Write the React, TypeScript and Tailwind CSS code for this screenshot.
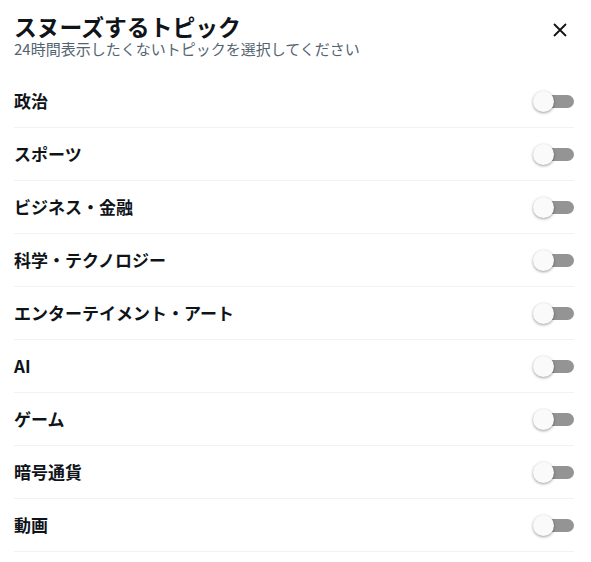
import React from "react";

const topics = [
  "政治",
  "スポーツ",
  "ビジネス・金融",
  "科学・テクノロジー",
  "エンターテイメント・アート",
  "AI",
  "ゲーム",
  "暗号通貨",
  "動画",
];

function Toggle() {
  return (
    <div className="relative w-[41px] h-[21px] flex items-center justify-end">
      <div className="w-[35px] h-[13px] rounded-full bg-[#949494]" />
      <div className="absolute left-0 top-0 w-[21px] h-[21px] rounded-full bg-[#fafafa] shadow-[0_1px_3px_rgba(0,0,0,0.4)]" />
    </div>
  );
}

export default function App() {
  return (
    <div
      className="w-[591px] h-[562px] bg-white pl-[14px] pr-[17px] overflow-hidden"
      style={{ fontFamily: '"Noto Sans CJK JP", "Noto Sans", sans-serif' }}
    >
      <div className="flex justify-between items-start pt-[14px]">
        <div className="flex flex-col">
          <div className="text-[22.8px] leading-[26px] font-bold text-[#0f1419]">
            スヌーズするトピック
          </div>
          <div className="text-[15px] leading-[18px] text-[#536471]">
            24時間表示したくないトピックを選択してください
          </div>
        </div>
        <button className="mt-[8px] mr-[7px] w-[15px] h-[15px] flex items-center justify-center text-[#0f1419]">
          <svg width="14" height="14" viewBox="0 0 14 14" fill="none">
            <path d="M1 1L13 13M13 1L1 13" stroke="currentColor" strokeWidth="1.8" />
          </svg>
        </button>
      </div>
      <div className="mt-[17px] flex flex-col">
        {topics.map((t) => (
          <div
            key={t}
            className="h-[53px] flex items-center justify-between border-b border-[#eff3f4]"
          >
            <span className="text-[17px] font-bold text-[#0f1419]">{t}</span>
            <Toggle />
          </div>
        ))}
      </div>
    </div>
  );
}
